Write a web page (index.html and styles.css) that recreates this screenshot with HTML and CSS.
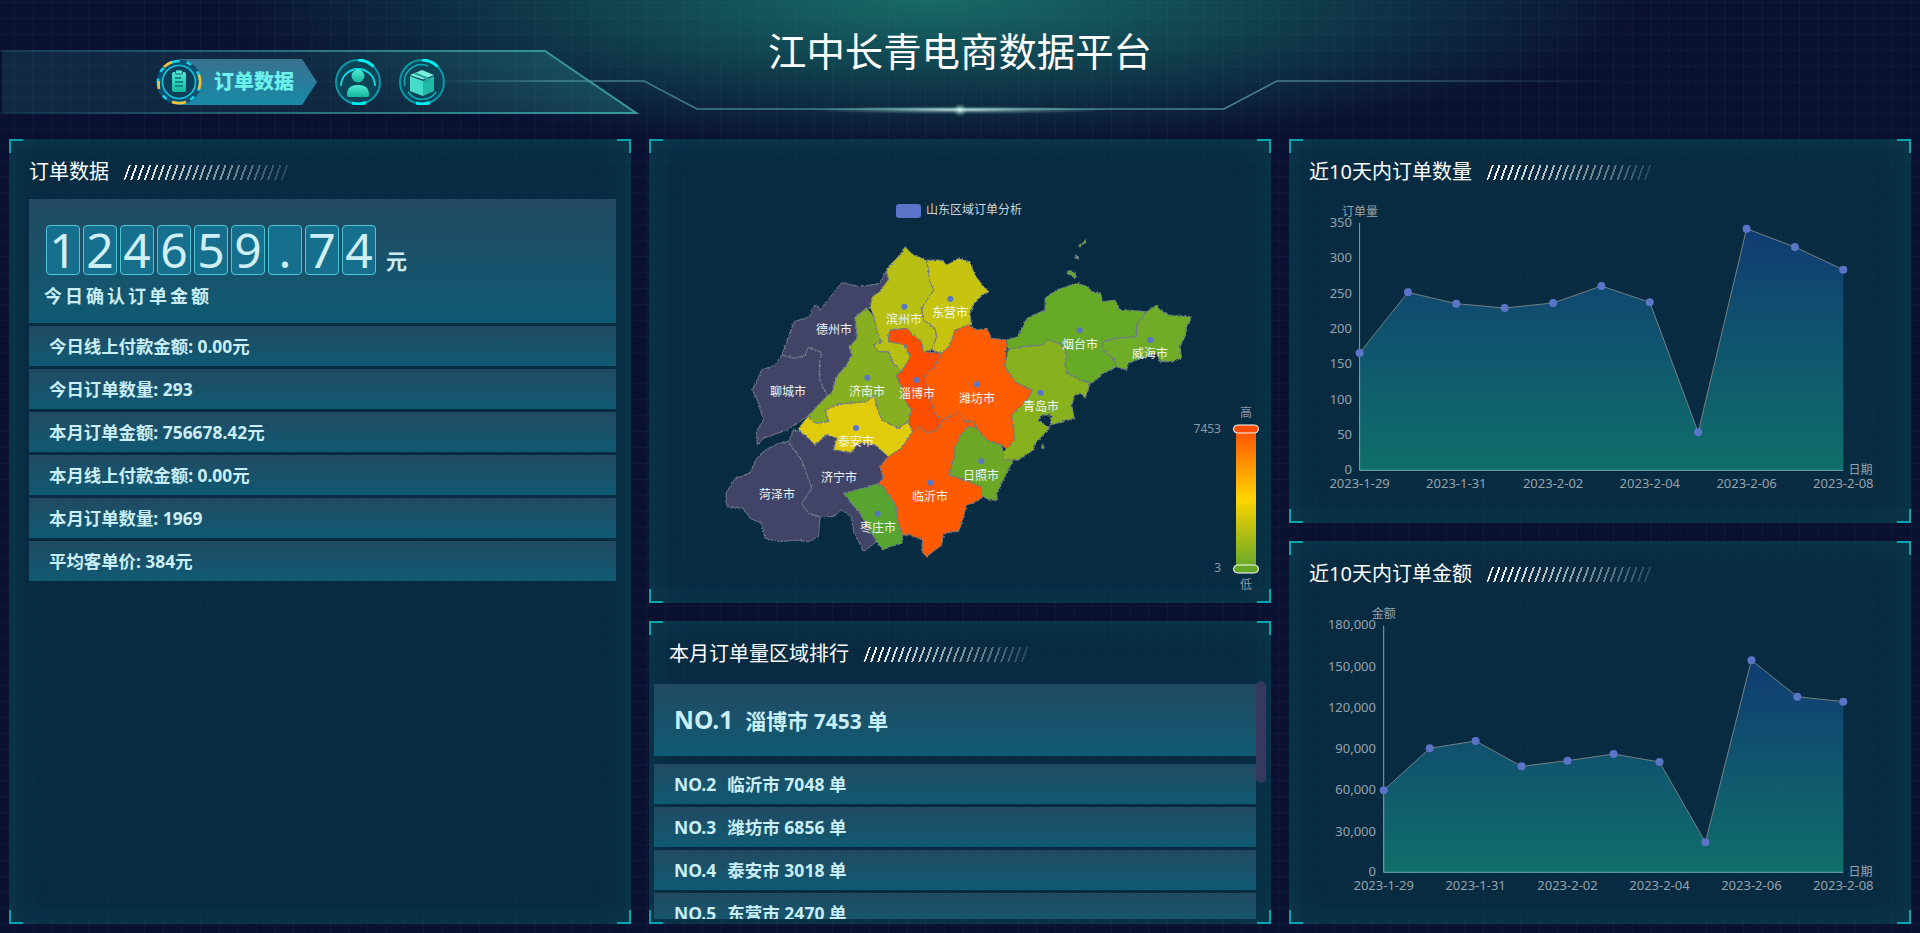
FILE: index.html
```html
<!DOCTYPE html>
<html lang="zh-CN">
<head>
<meta charset="utf-8">
<title>江中长青电商数据平台</title>
<link rel="stylesheet" href="styles.css">
</head>
<body>
<div class="app">
  <svg class="decor" viewBox="0 0 1920 139" width="1920" height="139">
    <defs>
      <linearGradient id="tabFill" x1="0" y1="0" x2="1" y2="0">
        <stop offset="0" stop-color="#2a8e8e" stop-opacity=".2"/>
        <stop offset=".5" stop-color="#2a8e8e" stop-opacity=".18"/>
        <stop offset="1" stop-color="#2f9a9a" stop-opacity=".32"/>
      </linearGradient>
      <linearGradient id="tabEdge" gradientUnits="userSpaceOnUse" x1="0" y1="0" x2="640" y2="0">
        <stop offset="0" stop-color="#2f8f96" stop-opacity=".12"/>
        <stop offset=".5" stop-color="#2f8f96" stop-opacity=".75"/>
        <stop offset="1" stop-color="#3a9a9c"/>
      </linearGradient>
      <linearGradient id="wire" gradientUnits="userSpaceOnUse" x1="430" y1="0" x2="1620" y2="0">
        <stop offset="0" stop-color="#4b8f9a" stop-opacity="0"/>
        <stop offset=".1" stop-color="#4b8f9a" stop-opacity=".8"/>
        <stop offset=".7" stop-color="#5b98a4" stop-opacity=".8"/>
        <stop offset="1" stop-color="#5b98a4" stop-opacity="0"/>
      </linearGradient>
      <radialGradient id="glowWide">
        <stop offset="0" stop-color="#fff" stop-opacity=".75"/>
        <stop offset=".5" stop-color="#bfe" stop-opacity=".3"/>
        <stop offset="1" stop-color="#bfe" stop-opacity="0"/>
      </radialGradient>
    </defs>
    <polygon points="2,50 545,50 636,113 2,113" fill="url(#tabFill)"/>
    <polyline points="0,51 545,51 636,113 0,113" fill="none" stroke="url(#tabEdge)" stroke-width="2"/>
    <polyline points="430,81 644,81 697,109 1224,109 1277,81 1620,81" fill="none" stroke="url(#wire)" stroke-width="1.5"/>
    <ellipse cx="960" cy="110" rx="150" ry="4" fill="url(#glowWide)"/>
    <ellipse cx="960" cy="110" rx="7" ry="7" fill="url(#glowWide)"/>
  </svg>

  <header class="header">
    <nav class="nav">
      <div class="tab">
        <svg class="tab-icon" viewBox="-23 -23 46 46" width="46" height="46">
          <defs>
            <linearGradient id="mint" x1="0" y1="0" x2="0" y2="1">
              <stop offset="0" stop-color="#4fe8d4"/>
              <stop offset="1" stop-color="#14b89a"/>
            </linearGradient>
          </defs>
          <circle r="22.5" fill="#0e5272"/>
          <circle r="21" fill="none" stroke="#14d4ea" stroke-width="2.6" stroke-dasharray="9 7 5 9"/>
          <path d="M-7 -20A21 21 0 0 0 -15 -15M20 -7A21 21 0 0 1 20 7M7 20A21 21 0 0 1 -7 20M-20 7A21 21 0 0 1 -20 -1" fill="none" stroke="#f4c23a" stroke-width="2.6"/>
          <circle r="16.5" fill="#0d3e5a" stroke="#10c4dc" stroke-width="1.6"/>
          <rect x="-7" y="-10" width="14" height="20" rx="2" fill="url(#mint)"/>
          <rect x="-3.5" y="-12" width="7" height="4" rx="1" fill="#4fe8d4" stroke="#0d3e5a" stroke-width=".8"/>
          <path d="M-4 -4H2M-4 0H4M-4 4H4" stroke="#0f6e78" stroke-width="1.3"/>
        </svg>
        <span class="tab-text">订单数据</span>
      </div>
      <svg class="nav-icon" viewBox="-23 -23 46 46" width="46" height="46">
        <circle r="22" fill="#0d4558" stroke="#0a98a8" stroke-width="2"/>
        <path d="M0 -22A22 22 0 0 1 15.5 -15.5M-6 21A22 22 0 0 0 8 20.5" fill="none" stroke="#00eef0" stroke-width="3"/>
        <path d="M-17 4A17 17 0 0 1 17 4" fill="none" stroke="#00e4e8" stroke-width="1.8"/>
        <circle cy="-6" r="6.5" fill="url(#mint)"/>
        <path d="M-11 13C-11 5 -6 3 0 3S11 5 11 13C11 15 9 15 8 15H-8C-9 15 -11 15 -11 13Z" fill="url(#mint)"/>
      </svg>
      <svg class="nav-icon" viewBox="-23 -23 46 46" width="46" height="46">
        <circle r="22" fill="#0d4558" stroke="#0a98a8" stroke-width="2"/>
        <path d="M0 -22A22 22 0 0 1 15.5 -15.5M-6 21A22 22 0 0 0 8 20.5" fill="none" stroke="#00eef0" stroke-width="3"/>
        <path d="M-17 4A17 17 0 0 1 6 -16M-14 10A17 17 0 0 0 14 10" fill="none" stroke="#0ab4c0" stroke-width="1.4"/>
        <path d="M-12 -6L1 -1V14L-12 9Z" fill="#46dccb"/>
        <path d="M1 -1L12 -6V9L1 14Z" fill="#22b8a8"/>
        <path d="M-12 -7L0 -12L12 -7L1 -2.5Z" fill="#7ef0e0"/>
        <path d="M-6 -9.6L6 -4.5V0L3 1V-3.5L-9 -8.4Z" fill="#1fa59a"/>
      </svg>
    </nav>
    <h1 class="title">江中长青电商数据平台</h1>
  </header>

  <main class="board">
    <section class="col">
      <div class="panel panel-fill">
        <i class="cn tl"></i><i class="cn tr"></i><i class="cn bl"></i><i class="cn br"></i>
        <div class="head"><h2>订单数据</h2><b class="slashes"></b></div>
        <div class="stats">
          <div class="bar hero">
            <div class="digits">
              <span class="digit">1</span><span class="digit">2</span><span class="digit">4</span><span class="digit">6</span><span class="digit">5</span><span class="digit">9</span><span class="digit">.</span><span class="digit">7</span><span class="digit">4</span>
              <span class="unit">元</span>
            </div>
            <div class="hero-label">今日确认订单金额</div>
          </div>
          <div class="bar row">今日线上付款金额: 0.00元</div>
          <div class="bar row">今日订单数量: 293</div>
          <div class="bar row">本月订单金额: 756678.42元</div>
          <div class="bar row">本月线上付款金额: 0.00元</div>
          <div class="bar row">本月订单数量: 1969</div>
          <div class="bar row">平均客单价: 384元</div>
        </div>
      </div>
    </section>

    <section class="col">
      <div class="panel panel-map">
        <i class="cn tl"></i><i class="cn tr"></i><i class="cn bl"></i><i class="cn br"></i>
        <svg class="map" viewBox="0 0 622 464" width="622" height="464">
          <defs>
            <linearGradient id="scale" x1="0" y1="0" x2="0" y2="1">
              <stop offset="0" stop-color="#ff4d00"/>
              <stop offset=".5" stop-color="#ffd500"/>
              <stop offset="1" stop-color="#65a828"/>
            </linearGradient>
            <filter id="rough" x="-5%" y="-5%" width="110%" height="110%" color-interpolation-filters="sRGB">
              <feTurbulence type="fractalNoise" baseFrequency=".16" numOctaves="2" seed="4"/>
              <feDisplacementMap in="SourceGraphic" scale="9" xChannelSelector="R" yChannelSelector="G"/>
            </filter>
          </defs>
          <rect class="leg-key" x="247" y="65" width="25" height="14" rx="3"/>
          <text class="leg-text" x="277" y="70">山东区域订单分析</text>

          <g transform="translate(71 91) scale(.33333)">
            <g class="regions" filter="url(#rough)">
              <polygon class="r-none" points="500,120 505,150 478,185 458,200 450,232 440,235 405,262 412,325 388,350 395,375 380,405 350,440 335,490 322,497 300,455 298,400 305,368 265,352 255,378 225,385 185,375 205,325 222,275 270,260 275,235 290,225 300,240 365,158 420,170 480,160"/>
              <polygon class="r-none" points="185,375 225,385 255,378 265,352 305,368 298,400 300,455 322,497 290,530 268,555 240,575 200,600 130,625 112,645 110,605 130,570 112,510 97,480 125,420 165,405"/>
              <polygon class="r-jinan" points="405,262 440,235 462,260 470,300 485,335 460,345 475,365 505,365 520,400 545,425 528,435 545,470 555,510 575,540 565,575 535,595 485,570 470,530 462,495 440,515 385,520 350,525 315,540 327,575 290,580 270,570 268,555 322,497 335,490 350,440 380,405 395,375 388,350 412,325"/>
              <polygon class="r-taian" points="235,595 268,555 270,570 290,580 327,575 315,540 350,525 385,520 440,515 462,495 470,530 485,570 535,595 565,575 578,605 545,655 505,680 465,645 440,640 415,640 395,668 340,660 350,625 320,615 285,645 260,620 240,605"/>
              <polygon class="r-none" points="205,635 220,600 240,605 260,620 285,645 320,615 350,625 340,660 395,668 415,640 465,645 505,680 480,710 490,745 475,760 430,775 370,790 420,850 470,935 430,965 400,900 395,860 365,840 340,860 300,860 265,850 245,820 275,775 265,745 245,690"/>
              <polygon class="r-none" points="205,635 245,690 265,745 275,775 245,820 265,850 300,860 295,920 265,935 230,930 180,935 135,925 125,880 90,865 70,835 20,830 18,790 45,745 90,730 110,685 145,655 175,640"/>
              <polygon class="r-zaozhuang" points="370,790 430,775 475,760 490,770 530,830 530,860 548,915 545,940 510,950 490,960 470,935 420,850"/>
              <polygon class="r-linyi" points="505,680 545,655 578,605 600,590 620,608 650,600 670,570 715,545 735,575 765,575 770,595 745,590 725,610 705,650 705,670 688,735 735,750 785,770 790,800 770,815 740,825 725,880 715,905 695,905 670,915 665,945 620,980 605,965 608,930 570,915 548,915 530,860 530,830 490,770 475,760 490,745 480,710"/>
              <polygon class="r-rizhao" points="725,610 745,590 770,595 800,630 845,645 855,690 880,690 855,740 830,790 832,810 805,810 785,795 785,770 735,750 688,735 705,670 705,650"/>
              <polygon class="r-weifang" points="690,345 705,300 745,285 770,300 800,295 815,325 860,330 855,410 885,455 937,480 925,505 875,555 885,630 865,660 845,645 800,630 770,595 765,575 735,575 715,545 670,570 650,600 645,555 620,470 615,435 640,415 665,370"/>
              <polygon class="r-zibo" points="505,320 510,300 560,295 585,320 605,335 610,365 665,370 640,415 615,435 620,470 645,555 670,570 650,600 620,608 600,590 578,605 565,575 575,540 555,510 545,470 528,435 545,425 570,380 555,345 505,335"/>
              <polygon class="r-binzhou" points="555,50 580,75 620,90 625,120 630,155 642,180 605,235 610,270 645,295 650,320 635,360 610,365 605,335 585,320 560,295 510,300 505,320 505,335 555,345 570,380 545,425 520,400 505,365 475,365 460,345 485,335 470,300 462,260 450,232 458,200 478,185 505,150 500,120 510,105 540,75"/>
              <polygon class="r-dongying" points="620,90 665,90 680,105 715,85 750,95 765,135 790,170 808,185 785,195 760,225 750,250 755,285 745,285 705,300 690,345 665,370 635,360 650,320 645,295 610,270 605,235 642,180 630,155 625,120"/>
              <polygon class="r-yantai" points="860,330 895,320 920,265 975,240 975,205 1010,180 1070,160 1105,170 1115,185 1140,190 1150,215 1185,210 1200,240 1220,240 1280,245 1250,285 1250,320 1190,325 1150,335 1148,360 1180,385 1190,410 1150,430 1115,460 1080,450 1040,430 1035,405 1040,380 1036,360 1020,340 980,330 970,345 910,350 865,358"/>
              <polygon class="r-qingdao" points="865,358 910,350 970,345 980,330 1020,340 1036,360 1040,380 1035,405 1040,430 1080,450 1110,460 1105,480 1095,505 1085,490 1065,495 1055,525 1063,565 1010,580 990,585 995,555 965,555 955,570 990,595 960,625 945,640 940,660 895,690 850,690 850,665 885,630 875,555 925,505 937,480 885,455 855,410"/>
              <polygon class="r-weihai" points="1280,245 1310,225 1320,240 1345,255 1415,260 1400,290 1395,320 1380,350 1385,385 1355,395 1320,395 1310,370 1265,385 1225,400 1220,420 1190,410 1180,385 1148,360 1150,335 1190,325 1250,320 1250,285"/>
              <polygon class="r-qingdao" points="965,645 972,645 972,655 965,655"/>
              <polygon class="r-yantai" points="1095,30 1098,38 1090,42 1080,52 1076,46 1088,38"/>
              <polygon class="r-yantai" points="1066,75 1074,78 1076,88 1068,84"/>
              <polygon class="r-yantai" points="1042,124 1052,122 1066,130 1068,146 1060,142 1052,134 1044,134"/>
            </g>
            <circle class="dot" cx="553" cy="230" r="9"/><circle class="dot" cx="691" cy="207" r="9"/>
            <circle class="dot" cx="442" cy="443" r="9"/><circle class="dot" cx="590" cy="450" r="9"/>
            <circle class="dot" cx="771" cy="463" r="9"/><circle class="dot" cx="408" cy="594" r="9"/>
            <circle class="dot" cx="631" cy="758" r="9"/><circle class="dot" cx="784" cy="694" r="9"/>
            <circle class="dot" cx="473" cy="851" r="9"/><circle class="dot" cx="962" cy="488" r="9"/>
            <circle class="dot" cx="1079" cy="301" r="9"/><circle class="dot" cx="1291" cy="330" r="9"/>
          </g>
          <g class="cities">
            <text x="255" y="180">滨州市</text><text x="301" y="173">东营市</text>
            <text x="185" y="190">德州市</text><text x="139" y="252">聊城市</text>
            <text x="218" y="252">济南市</text><text x="268" y="254">淄博市</text>
            <text x="328" y="259">潍坊市</text><text x="207" y="302">泰安市</text>
            <text x="190" y="338">济宁市</text><text x="128" y="355">菏泽市</text>
            <text x="281" y="357">临沂市</text><text x="332" y="336">日照市</text>
            <text x="229" y="388">枣庄市</text><text x="392" y="267">青岛市</text>
            <text x="431" y="205">烟台市</text><text x="501" y="214">威海市</text>
          </g>

          <rect class="scale-bar" x="587" y="290" width="20" height="139"/>
          <rect class="handle handle-hi" x="584.5" y="286" width="25" height="8" rx="4"/>
          <rect class="handle handle-lo" x="584.5" y="426" width="25" height="8" rx="4"/>
          <text class="scale-text mid" x="597" y="273">高</text>
          <text class="scale-text mid" x="597" y="445">低</text>
          <text class="scale-text end" x="572" y="289">7453</text>
          <text class="scale-text end" x="572" y="428">3</text>
        </svg>
      </div>

      <div class="panel panel-grow">
        <i class="cn tl"></i><i class="cn tr"></i><i class="cn bl"></i><i class="cn br"></i>
        <div class="head"><h2>本月订单量区域排行</h2><b class="slashes"></b></div>
        <div class="rank-wrap">
          <div class="rank-list">
            <div class="bar rank rank-first"><span class="no">NO.1</span>淄博市 7453 单</div>
            <div class="bar rank"><span class="no">NO.2</span>临沂市 7048 单</div>
            <div class="bar rank"><span class="no">NO.3</span>潍坊市 6856 单</div>
            <div class="bar rank"><span class="no">NO.4</span>泰安市 3018 单</div>
            <div class="bar rank"><span class="no">NO.5</span>东营市 2470 单</div>
          </div>
          <span class="thumb"></span>
        </div>
      </div>
    </section>

    <section class="col">
      <div class="panel panel-chart">
        <i class="cn tl"></i><i class="cn tr"></i><i class="cn bl"></i><i class="cn br"></i>
        <div class="head"><h2>近10天内订单数量</h2><b class="slashes"></b></div>
        <svg class="chart" viewBox="0 0 622 338" width="622" height="338">
          <defs>
            <linearGradient id="area" x1="0" y1="0" x2="0" y2="1">
              <stop offset="0" stop-color="#103c72"/>
              <stop offset="1" stop-color="#0f6f6a"/>
            </linearGradient>
          </defs>
          <polygon class="area" points="70.6,285.3 70.6,168 119,107.3 167.3,118.7 215.7,123 264.1,118 312.4,101 360.8,117.3 409.2,247.3 457.6,43.7 505.9,62 554.3,84.7 554.3,285.3"/>
          <polyline class="line" points="70.6,168 119,107.3 167.3,118.7 215.7,123 264.1,118 312.4,101 360.8,117.3 409.2,247.3 457.6,43.7 505.9,62 554.3,84.7"/>
          <line class="axis-y" x1="70.6" y1="38" x2="70.6" y2="285.3"/>
          <line class="axis-x" x1="70.6" y1="285.3" x2="554.3" y2="285.3"/>
          <g class="dots">
            <circle cx="70.6" cy="168" r="4"/><circle cx="119" cy="107.3" r="4"/><circle cx="167.3" cy="118.7" r="4"/><circle cx="215.7" cy="123" r="4"/><circle cx="264.1" cy="118" r="4"/><circle cx="312.4" cy="101" r="4"/><circle cx="360.8" cy="117.3" r="4"/><circle cx="409.2" cy="247.3" r="4"/><circle cx="457.6" cy="43.7" r="4"/><circle cx="505.9" cy="62" r="4"/><circle cx="554.3" cy="84.7" r="4"/>
          </g>
          <g class="tick end">
            <text x="63" y="37">350</text><text x="63" y="72.3">300</text><text x="63" y="107.7">250</text><text x="63" y="143">200</text><text x="63" y="178.3">150</text><text x="63" y="213.6">100</text><text x="63" y="249">50</text><text x="63" y="284.3">0</text>
          </g>
          <g class="tick mid">
            <text x="70.6" y="297.5">2023-1-29</text><text x="167.3" y="297.5">2023-1-31</text><text x="264.1" y="297.5">2023-2-02</text><text x="360.8" y="297.5">2023-2-04</text><text x="457.6" y="297.5">2023-2-06</text><text x="554.3" y="297.5">2023-2-08</text>
          </g>
          <text class="axis-name mid" x="71" y="26">订单量</text>
          <text class="axis-name" x="559.6" y="284">日期</text>
        </svg>
      </div>

      <div class="panel panel-grow">
        <i class="cn tl"></i><i class="cn tr"></i><i class="cn bl"></i><i class="cn br"></i>
        <div class="head"><h2>近10天内订单金额</h2><b class="slashes"></b></div>
        <svg class="chart" viewBox="0 0 622 337" width="622" height="337">
          <polygon class="area" points="94.7,285.3 94.7,203.3 140.7,161.3 186.6,154 232.6,179.3 278.5,173.7 324.5,167 370.5,175 416.4,255.3 462.4,73.3 508.3,109.7 554.3,114.7 554.3,285.3"/>
          <polyline class="line" points="94.7,203.3 140.7,161.3 186.6,154 232.6,179.3 278.5,173.7 324.5,167 370.5,175 416.4,255.3 462.4,73.3 508.3,109.7 554.3,114.7"/>
          <line class="axis-y" x1="94.7" y1="38.7" x2="94.7" y2="285.3"/>
          <line class="axis-x" x1="94.7" y1="285.3" x2="554.3" y2="285.3"/>
          <g class="dots">
            <circle cx="94.7" cy="203.3" r="4"/><circle cx="140.7" cy="161.3" r="4"/><circle cx="186.6" cy="154" r="4"/><circle cx="232.6" cy="179.3" r="4"/><circle cx="278.5" cy="173.7" r="4"/><circle cx="324.5" cy="167" r="4"/><circle cx="370.5" cy="175" r="4"/><circle cx="416.4" cy="255.3" r="4"/><circle cx="462.4" cy="73.3" r="4"/><circle cx="508.3" cy="109.7" r="4"/><circle cx="554.3" cy="114.7" r="4"/>
          </g>
          <g class="tick end">
            <text x="87" y="37.3">180,000</text><text x="87" y="78.7">150,000</text><text x="87" y="119.7">120,000</text><text x="87" y="160.7">90,000</text><text x="87" y="202.3">60,000</text><text x="87" y="243.7">30,000</text><text x="87" y="284.3">0</text>
          </g>
          <g class="tick mid">
            <text x="94.7" y="297.5">2023-1-29</text><text x="186.6" y="297.5">2023-1-31</text><text x="278.5" y="297.5">2023-2-02</text><text x="370.5" y="297.5">2023-2-04</text><text x="462.4" y="297.5">2023-2-06</text><text x="554.3" y="297.5">2023-2-08</text>
          </g>
          <text class="axis-name mid" x="94.7" y="26">金额</text>
          <text class="axis-name" x="559.6" y="284">日期</text>
        </svg>
      </div>
    </section>
  </main>
</div>
</body>
</html>
```
FILE: styles.css
```css
* { box-sizing: border-box; }
html, body { margin: 0; height: 100%; overflow: hidden; }
body {
  font-family: "Noto Sans", "Noto Sans CJK SC", sans-serif;
  color: #fff;
  background-color: #0a1030;
  background-image:
    linear-gradient(rgba(70, 130, 150, .085) 1px, transparent 1px),
    linear-gradient(90deg, rgba(70, 130, 150, .085) 1px, transparent 1px),
    radial-gradient(ellipse 720px 150px at 930px 0, #176a68 0, rgba(20, 100, 100, .6) 45%, rgba(20, 90, 100, 0) 100%);
  background-size: 18.6px 15.9px, 18.6px 15.9px, 100% 100%;
  background-position: 0 2px, 14px 0, 0 0;
}
.app { position: relative; width: 1920px; height: 933px; padding: 0 9px 9px; display: flex; flex-direction: column; }
.decor { position: absolute; left: 0; top: 0; }

/* header */
.header { position: relative; height: 139px; flex: none; display: grid; grid-template-columns: 1fr auto 1fr; }
.title { margin: 26px 0 0; font-size: 38.4px; line-height: 50px; font-weight: 400; letter-spacing: 0; align-self: start; }
.nav { display: flex; align-items: center; gap: 18px; height: 46px; margin-top: 59px; padding-left: 147px; }
.tab { position: relative; display: flex; align-items: center; width: 161px; height: 46px; }
.tab::before {
  content: ""; position: absolute; inset: 0 0 0 23px;
  background: linear-gradient(#39708f, #178aa8);
  clip-path: polygon(0 0, 123px 0, 100% 50%, 123px 100%, 0 100%);
}
.tab-icon { position: relative; flex: none; }
.tab-text { position: relative; margin-left: 12px; font-size: 20px; line-height: 28px; font-weight: 900; color: #6cf0ea; white-space: nowrap; }
.nav-icon { flex: none; }

/* board */
.board { flex: 1; min-height: 0; display: grid; grid-template-columns: repeat(3, 622px); column-gap: 18px; }
.col { display: flex; flex-direction: column; gap: 18px; min-height: 0; }
.panel {
  position: relative;
  background: rgba(6, 62, 76, .6);
  box-shadow: inset 0 0 34px rgba(30, 130, 135, .2);
}
.panel-fill, .panel-grow { flex: 1; min-height: 0; }
.panel-map { height: 464px; flex: none; }
.panel-chart { height: 384px; flex: none; }
.cn { position: absolute; width: 14px; height: 14px; border: 0 solid #04a6b2; }
.tl { left: 0; top: 0; border-width: 2px 0 0 2px; }
.tr { right: 0; top: 0; border-width: 2px 2px 0 0; }
.bl { left: 0; bottom: 0; border-width: 0 0 2px 2px; }
.br { right: 0; bottom: 0; border-width: 0 2px 2px 0; }

.head { display: flex; align-items: center; height: 26px; margin-top: 0; padding: 20px 0 0 20px; box-sizing: content-box; }
.head h2 { margin: 0; font-size: 20px; line-height: 26px; font-weight: 400; white-space: nowrap; }
.slashes {
  display: block; width: 164px; height: 15px; margin-left: 17px;
  transform: skewX(-20deg);
  background: repeating-linear-gradient(90deg, #fff 0 2px, transparent 2px 6.85px);
  -webkit-mask-image: linear-gradient(90deg, #000, rgba(0, 0, 0, .12));
  mask-image: linear-gradient(90deg, #000, rgba(0, 0, 0, .12));
}

/* stats */
.bar { background: linear-gradient(#224a62, #0f5a73); color: #c9eef6; font-weight: 700; }
.stats { display: flex; flex-direction: column; gap: 3px; margin: 14px 15px 0 20px; }
.hero { height: 124px; padding: 26px 0 0 17px; }
.digits { display: flex; gap: 3px; height: 50px; }
.digit {
  width: 34px; height: 50px; text-align: center;
  border: 1px solid #4ac6d8; border-radius: 4px; background: #176f8e;
  font-size: 48px; line-height: 47px; font-weight: 400; color: #cfeff6;
}
.unit { align-self: flex-end; margin-left: 7px; font-size: 21px; line-height: 28px; }
.hero-label { margin: 9px 0 0 -2px; font-size: 18px; line-height: 24px; letter-spacing: 3px; }
.row { height: 40px; padding-left: 20px; font-size: 17.4px; line-height: 40px; }

/* ranking */
.rank-wrap { position: relative; margin: 14px 5px 0; height: 238px; overflow: hidden; }
.rank-list { display: flex; flex-direction: column; gap: 3px; padding: 3px 10px 0 0; }
.rank { flex: none; height: 40px; padding-left: 20px; font-size: 17.5px; line-height: 40px; }
.rank .no { margin-right: 11px; }
.rank-first { height: 72px; margin-bottom: 5px; font-size: 21px; line-height: 72px; }
.rank-first .no { font-size: 24.5px; margin-right: 12px; }
.thumb { position: absolute; right: 0; top: 0; width: 10px; height: 102px; border-radius: 5px; background: #35385f; }

/* map */
.map { position: absolute; left: 0; top: 0; display: block; }
.leg-key { fill: #5a75c8; }
.leg-text { font-size: 12px; fill: #cfd6dc; dominant-baseline: central; }
.regions polygon { stroke: #6f7a88; stroke-width: 3; stroke-linejoin: round; }
.r-none { fill: #414467; }
.r-jinan { fill: #86b01f; }
.r-taian { fill: #e0cc0a; }
.r-zaozhuang { fill: #57a430; }
.r-linyi { fill: #ff5a00; }
.r-rizhao { fill: #6ca826; }
.r-weifang { fill: #ff5d00; }
.r-zibo { fill: #ff4d00; }
.r-binzhou { fill: #b7bf12; }
.r-dongying { fill: #c6c40f; }
.r-yantai { fill: #67aa26; }
.r-qingdao { fill: #88b11e; }
.r-weihai { fill: #6fac28; }
.dot { fill: #5a75c8; }
.cities text { font-size: 12px; fill: #f1f4f4; text-anchor: middle; dominant-baseline: central; }
.scale-bar { fill: url(#scale); }
.handle { stroke: #fff; stroke-width: 1; }
.handle-hi { fill: #ff4d00; }
.handle-lo { fill: #65a828; }
.scale-text { font-size: 12px; fill: #8b98a6; dominant-baseline: central; }
.mid { text-anchor: middle; }
.end { text-anchor: end; }

/* charts */
.chart { display: block; }
.area { fill: url(#area); }
.line { fill: none; stroke: #75807f; stroke-width: 1; }
.axis-y { stroke: #8fa0aa; stroke-width: 1; }
.axis-x { stroke: #74aeb0; stroke-width: 1; }
.dots circle { fill: #5a75c8; }
.tick { font-size: 13px; fill: #96a3ad; dominant-baseline: central; }
.tick text { dominant-baseline: central; }
.axis-name { font-size: 12px; fill: #96a3ad; dominant-baseline: central; }
```
